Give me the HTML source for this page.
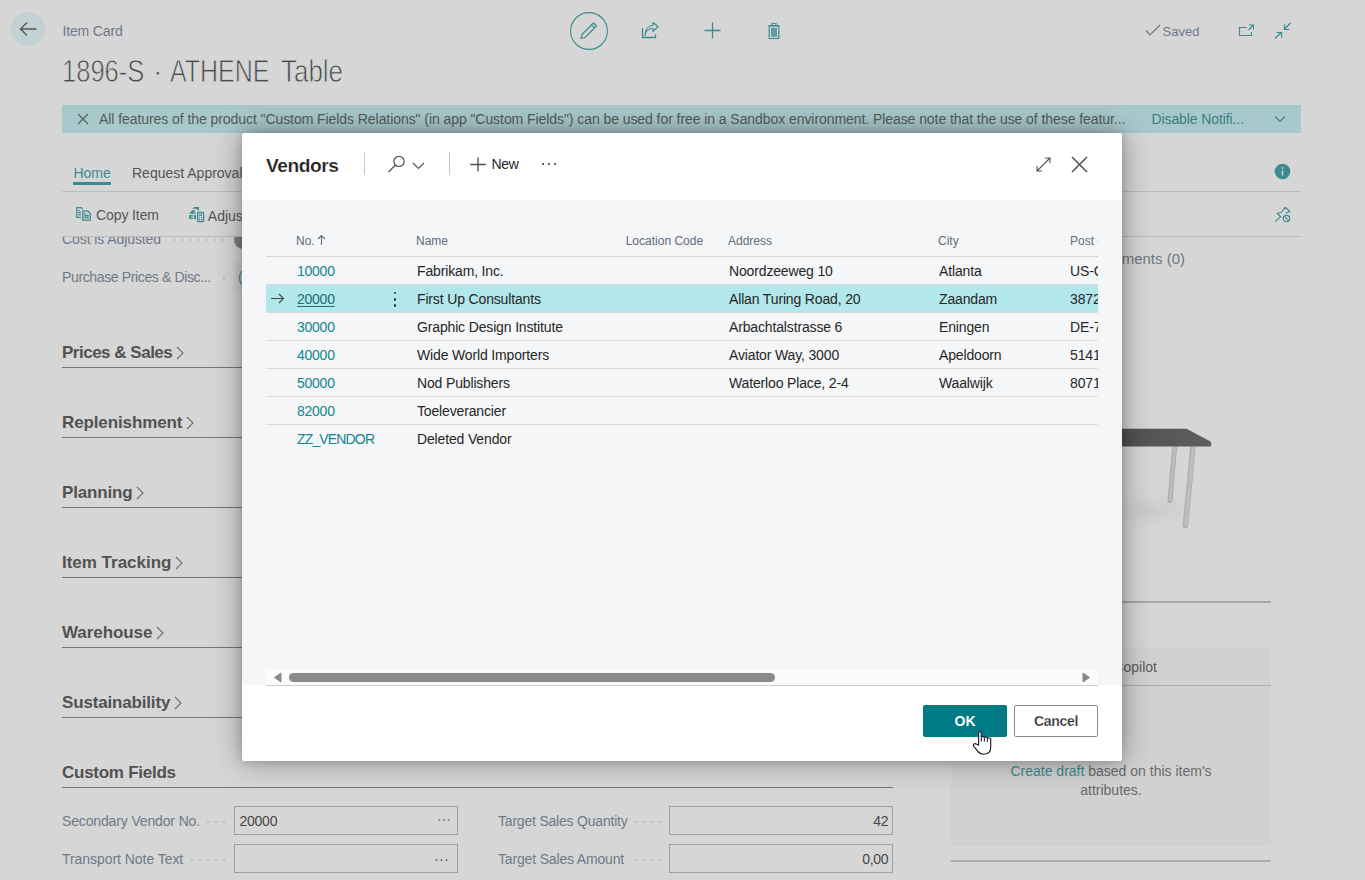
<!DOCTYPE html>
<html><head><meta charset="utf-8"><style>
html,body{margin:0;padding:0;}
body{width:1365px;height:880px;position:relative;overflow:hidden;background:#d6d6d6;font-family:"Liberation Sans", sans-serif;}
.t{position:absolute;white-space:nowrap;line-height:1;}
.r{position:absolute;}
svg.r{overflow:visible;}
</style></head><body>
<svg class="r" style="left:11px;top:12px;" width="34" height="34" viewBox="0 0 34 34"><circle cx="17" cy="17" r="17" fill="#c2d1d3"/><path d="M9.5 17H25.5M16 10.5L9.5 17L16 23.5" stroke="#555" stroke-width="1.3" fill="none"/></svg>
<div class="t" style="left:62.5px;top:24.15px;font-size:14px;color:#6f7987;letter-spacing:-0.15px;">Item Card</div>
<div class="t" style="left:62.4px;top:56.48px;font-size:30.5px;color:#4a4a4a;transform:scaleX(0.8370);transform-origin:0 0;-webkit-text-stroke:0.8px #d6d6d6;">1896-S</div>
<div class="t" style="left:152.8px;top:56.48px;font-size:30.5px;color:#4a4a4a;transform:scaleX(1.0000);transform-origin:0 0;-webkit-text-stroke:0.8px #d6d6d6;">·</div>
<div class="t" style="left:170px;top:56.48px;font-size:30.5px;color:#4a4a4a;transform:scaleX(0.8182);transform-origin:0 0;-webkit-text-stroke:0.8px #d6d6d6;">ATHENE</div>
<div class="t" style="left:280.6px;top:56.48px;font-size:30.5px;color:#4a4a4a;transform:scaleX(0.8506);transform-origin:0 0;-webkit-text-stroke:0.8px #d6d6d6;">Table</div>
<svg class="r" style="left:569px;top:11px;" width="40" height="40" viewBox="0 0 40 40"><circle cx="20" cy="20" r="18.4" stroke="#3d8b91" stroke-width="1.1" fill="none"/><path d="M12 27.5L13 23.5L24.5 12L27.5 15L16 26.5Z M22.5 14L25.5 17" stroke="#3d8b91" stroke-width="1.2" fill="none" stroke-linejoin="round"/></svg>
<svg class="r" style="left:640px;top:21px;" width="20" height="18" viewBox="0 0 20 18"><path d="M2.5 7V16.5H15.5V13.5" stroke="#3d8b91" stroke-width="1.3" fill="none"/><path d="M5 14.5C5.5 9.5 9 7.5 13 7.5V10.5L18 5.5L13 1.5V4.5C8 4.5 5 8.5 5 14.5Z" stroke="#3d8b91" stroke-width="1.2" fill="none" stroke-linejoin="round"/></svg>
<svg class="r" style="left:703px;top:21px;" width="19" height="19" viewBox="0 0 19 19"><path d="M9.5 1.5V17.5M1.5 9.5H17.5" stroke="#3d8b91" stroke-width="1.3"/></svg>
<svg class="r" style="left:766px;top:21px;" width="16" height="19" viewBox="0 0 16 19"><path d="M2.5 4.5H13.5M6 4.5V2.5H10V4.5" stroke="#3d8b91" stroke-width="1.2" fill="none"/><rect x="3.2" y="5" width="9.6" height="12.5" stroke="#3d8b91" stroke-width="1.2" fill="none"/><rect x="5" y="6.8" width="6" height="9" fill="#3d8b91" opacity="0.75"/></svg>
<svg class="r" style="left:1145px;top:24px;" width="16" height="13" viewBox="0 0 16 13"><path d="M1 6.5L5 11L15 1" stroke="#737b85" stroke-width="1.2" fill="none"/></svg>
<div class="t" style="left:1162.5px;top:25.00px;font-size:13px;color:#6f7987;letter-spacing:0px;">Saved</div>
<svg class="r" style="left:1238px;top:23px;" width="18" height="15" viewBox="0 0 18 15"><path d="M9 4.5H1.5V12.5H13.5V9" stroke="#3d8b91" stroke-width="1.2" fill="none"/><path d="M11 2H15.5V6.5M15.5 2L10.5 7" stroke="#3d8b91" stroke-width="1.1" fill="none"/></svg>
<svg class="r" style="left:1274px;top:22px;" width="18" height="18" viewBox="0 0 18 18"><path d="M16.5 1L10.5 7M10.5 2.5V7.5H15.5 M1 16.5L7 10.5M2.5 10.5H7.5V15.5" stroke="#3d8b91" stroke-width="1.2" fill="none"/></svg>
<div class="r" style="left:62px;top:105px;width:1239px;height:28px;background:#a8c9cc;"></div>
<svg class="r" style="left:77px;top:113px;" width="12" height="12" viewBox="0 0 12 12"><path d="M1 1L11 11M11 1L1 11" stroke="#5a5f60" stroke-width="1.2"/></svg>
<div class="t" style="left:99px;top:112.15px;font-size:14px;color:#535a5b;letter-spacing:-0.068px;">All features of the product "Custom Fields Relations" (in app "Custom Fields") can be used for free in a Sandbox environment. Please note that the use of these featur...</div>
<div class="t" style="left:1151.5px;top:112.15px;font-size:14px;color:#3c7e83;letter-spacing:-0.1px;">Disable Notifi...</div>
<svg class="r" style="left:1274px;top:115px;" width="12" height="8" viewBox="0 0 12 8"><path d="M1 1.5L6 6.5L11 1.5" stroke="#3c7e83" stroke-width="1.2" fill="none"/></svg>
<div class="t" style="left:73.4px;top:166.15px;font-size:14px;color:#3f8a8f;">Home</div>
<div class="r" style="left:73px;top:182px;width:38px;height:2.5px;background:#3f8a8f;"></div>
<div class="t" style="left:132px;top:166.15px;font-size:14px;color:#555555;">Request Approval</div>
<div class="r" style="left:62px;top:191px;width:1239px;height:1px;background:#b9bcbe;"></div>
<svg class="r" style="left:70px;top:200px;" width="30" height="28" viewBox="0 0 30 28"><g stroke="#3d8b91" stroke-width="1.3" fill="none" stroke-linejoin="round"><path d="M11 17.3H6.8V7.7H11.3L12.7 8.9"/><path d="M8.3 10.4H9.6M8.3 12.4H10.9M8.3 14.5H10.9"/><path d="M12.8 10.8H17.4L20.3 13.4V20.2H12.8Z"/><path d="M14.3 13.5H15.6M14.3 15.5H18.8M14.3 17.5H18.8"/></g></svg>
<div class="t" style="left:96px;top:208.15px;font-size:14px;color:#555555;letter-spacing:-0.1px;">Copy Item</div>
<svg class="r" style="left:184px;top:200px;" width="30" height="28" viewBox="0 0 30 28"><rect x="13.6" y="12.5" width="6" height="9" rx="0.8" stroke="#3d8b91" stroke-width="1.3" fill="none"/><rect x="15.1" y="14.2" width="3" height="1.6" fill="#3d8b91"/><g fill="#3d8b91"><circle cx="15.5" cy="17.5" r="0.65"/><circle cx="17.6" cy="17.5" r="0.65"/><circle cx="15.5" cy="19.4" r="0.65"/><circle cx="17.6" cy="19.4" r="0.65"/><path d="M5.1 15.1H8.9V16.6H7.1V17.8H8.9V19.1H5.1Z"/><path d="M9.9 15.1H11.9V19.1H9.9Z"/><path d="M5.1 13.7H11.9V12.6H9.4L11.9 10.2H8.2Z"/><path d="M8.1 8.7L10.5 7H15V10.6H13.3V8.7Z"/></g></svg>
<div class="t" style="left:207.8px;top:209.15px;font-size:14px;color:#555555;">Adjust Cost</div>
<svg class="r" style="left:1268px;top:200px;" width="30" height="28" viewBox="0 0 30 28"><g stroke="#3d8b91" stroke-width="1.15" fill="none" stroke-linejoin="round"><path d="M7.3 21.6L12.1 16.8M13.5 17.5L9.2 13.3L13.4 12.5L17 7.3L22.1 11.5L19.1 12.4L18 13.5"/><circle cx="18.5" cy="18.5" r="3.2"/><path d="M16.2 16.2L20.8 20.8"/></g></svg>
<svg class="r" style="left:1274px;top:163px;" width="17" height="17" viewBox="0 0 17 17"><circle cx="8.5" cy="8.5" r="7.8" fill="#3d8a90"/><path d="M8.5 7.5V12.5" stroke="#d6d6d6" stroke-width="1.4"/><circle cx="8.5" cy="5" r="0.9" fill="#d6d6d6"/></svg>
<div class="r" style="left:62px;top:236px;width:1239px;height:1px;background:#b9bcbe;"></div>
<div class="r" style="left:0;top:237px;width:1365px;height:643px;overflow:hidden">
<div class="r" style="left:0;top:-237px;width:1365px;height:880px;">
<div class="t" style="left:62px;top:232.15px;font-size:14px;color:#6f7987;letter-spacing:-0.087px;">Cost is Adjusted</div>
<div class="r" style="left:174px;top:239px;width:2px;height:2px;background:#b3b6ba;border-radius:1px;"></div>
<div class="r" style="left:182px;top:239px;width:2px;height:2px;background:#b3b6ba;border-radius:1px;"></div>
<div class="r" style="left:190px;top:239px;width:2px;height:2px;background:#b3b6ba;border-radius:1px;"></div>
<div class="r" style="left:198px;top:239px;width:2px;height:2px;background:#b3b6ba;border-radius:1px;"></div>
<div class="r" style="left:206px;top:239px;width:2px;height:2px;background:#b3b6ba;border-radius:1px;"></div>
<div class="r" style="left:214px;top:239px;width:2px;height:2px;background:#b3b6ba;border-radius:1px;"></div>
<div class="r" style="left:222px;top:239px;width:2px;height:2px;background:#b3b6ba;border-radius:1px;"></div>
<div class="r" style="left:234px;top:231px;width:30px;height:18px;background:#7b8087;border-radius:9px;"></div>
<div class="t" style="left:62px;top:270.15px;font-size:14px;color:#6f7987;letter-spacing:-0.365px;">Purchase Prices &amp; Disc...</div>
<div class="r" style="left:222.5px;top:278px;width:2px;height:2px;background:#b3b6ba;border-radius:1px;"></div>
<div class="r" style="left:234px;top:262px;width:300px;height:29px;background:#cfd0d1;"></div>
<div class="t" style="left:238px;top:270.15px;font-size:14px;color:#3d8b91;">(0)</div>
<div class="t" style="left:985px;top:251.30px;width:200px;text-align:right;font-size:15px;color:#70777f;">Attachments (0)</div>
<div class="t" style="left:62px;top:343.61px;font-size:17px;color:#525252;font-weight:700;letter-spacing:-0.493px;">Prices &amp; Sales</div>
<svg class="r" style="left:176.3px;top:346px;" width="8" height="14" viewBox="0 0 8 14"><path d="M1 1L7 7L1 13" stroke="#6a6e72" stroke-width="1.1" fill="none"/></svg>
<div class="r" style="left:62px;top:367px;width:831px;height:1px;background:#6f767e;"></div>
<div class="t" style="left:62px;top:413.61px;font-size:17px;color:#525252;font-weight:700;letter-spacing:-0.120px;">Replenishment</div>
<svg class="r" style="left:186.3px;top:416px;" width="8" height="14" viewBox="0 0 8 14"><path d="M1 1L7 7L1 13" stroke="#6a6e72" stroke-width="1.1" fill="none"/></svg>
<div class="r" style="left:62px;top:437px;width:831px;height:1px;background:#6f767e;"></div>
<div class="t" style="left:62px;top:483.61px;font-size:17px;color:#525252;font-weight:700;letter-spacing:-0.173px;">Planning</div>
<svg class="r" style="left:136.4px;top:486px;" width="8" height="14" viewBox="0 0 8 14"><path d="M1 1L7 7L1 13" stroke="#6a6e72" stroke-width="1.1" fill="none"/></svg>
<div class="r" style="left:62px;top:507px;width:831px;height:1px;background:#6f767e;"></div>
<div class="t" style="left:62px;top:553.61px;font-size:17px;color:#525252;font-weight:700;letter-spacing:-0.016px;">Item Tracking</div>
<svg class="r" style="left:175.4px;top:556px;" width="8" height="14" viewBox="0 0 8 14"><path d="M1 1L7 7L1 13" stroke="#6a6e72" stroke-width="1.1" fill="none"/></svg>
<div class="r" style="left:62px;top:577px;width:831px;height:1px;background:#6f767e;"></div>
<div class="t" style="left:62px;top:623.61px;font-size:17px;color:#525252;font-weight:700;letter-spacing:-0.068px;">Warehouse</div>
<svg class="r" style="left:156.4px;top:626px;" width="8" height="14" viewBox="0 0 8 14"><path d="M1 1L7 7L1 13" stroke="#6a6e72" stroke-width="1.1" fill="none"/></svg>
<div class="r" style="left:62px;top:647px;width:831px;height:1px;background:#6f767e;"></div>
<div class="t" style="left:62px;top:693.61px;font-size:17px;color:#525252;font-weight:700;letter-spacing:-0.167px;">Sustainability</div>
<svg class="r" style="left:174.2px;top:696px;" width="8" height="14" viewBox="0 0 8 14"><path d="M1 1L7 7L1 13" stroke="#6a6e72" stroke-width="1.1" fill="none"/></svg>
<div class="r" style="left:62px;top:717px;width:831px;height:1px;background:#6f767e;"></div>
<div class="t" style="left:62px;top:763.61px;font-size:17px;color:#525252;font-weight:700;letter-spacing:-0.263px;">Custom Fields</div>
<div class="r" style="left:62px;top:787px;width:831px;height:1px;background:#6f767e;"></div>
<div class="t" style="left:62px;top:814.15px;font-size:14px;color:#6f7987;letter-spacing:-0.144px;">Secondary Vendor No.</div>
<div class="r" style="left:206.5px;top:820.5px;width:2px;height:2px;background:#b3b6ba;border-radius:1px;"></div>
<div class="r" style="left:214.5px;top:820.5px;width:2px;height:2px;background:#b3b6ba;border-radius:1px;"></div>
<div class="r" style="left:222.5px;top:820.5px;width:2px;height:2px;background:#b3b6ba;border-radius:1px;"></div>
<div class="r" style="left:234px;top:806px;width:224px;height:29px;background:transparent;box-sizing:border-box;border:1px solid #9aa0a6;"></div>
<div class="t" style="left:62px;top:852.15px;font-size:14px;color:#6f7987;letter-spacing:-0.051px;">Transport Note Text</div>
<div class="r" style="left:190.5px;top:858.5px;width:2px;height:2px;background:#b3b6ba;border-radius:1px;"></div>
<div class="r" style="left:198.5px;top:858.5px;width:2px;height:2px;background:#b3b6ba;border-radius:1px;"></div>
<div class="r" style="left:206.5px;top:858.5px;width:2px;height:2px;background:#b3b6ba;border-radius:1px;"></div>
<div class="r" style="left:214.5px;top:858.5px;width:2px;height:2px;background:#b3b6ba;border-radius:1px;"></div>
<div class="r" style="left:222.5px;top:858.5px;width:2px;height:2px;background:#b3b6ba;border-radius:1px;"></div>
<div class="r" style="left:234px;top:844px;width:224px;height:29px;background:transparent;box-sizing:border-box;border:1px solid #9aa0a6;"></div>
<div class="t" style="left:239.5px;top:814.15px;font-size:14px;color:#474747;letter-spacing:-0.25px;">20000</div>
<div class="t" style="left:437px;top:812.15px;font-size:14px;color:#5a5f66;">···</div>
<div class="t" style="left:434px;top:851.30px;font-size:15px;color:#4f545b;">···</div>
<div class="t" style="left:498px;top:814.15px;font-size:14px;color:#6f7987;letter-spacing:-0.203px;">Target Sales Quantity</div>
<div class="r" style="left:634.5px;top:820.5px;width:2px;height:2px;background:#b3b6ba;border-radius:1px;"></div>
<div class="r" style="left:642.5px;top:820.5px;width:2px;height:2px;background:#b3b6ba;border-radius:1px;"></div>
<div class="r" style="left:650.5px;top:820.5px;width:2px;height:2px;background:#b3b6ba;border-radius:1px;"></div>
<div class="r" style="left:658.5px;top:820.5px;width:2px;height:2px;background:#b3b6ba;border-radius:1px;"></div>
<div class="r" style="left:669px;top:806px;width:224px;height:29px;background:transparent;box-sizing:border-box;border:1px solid #9aa0a6;"></div>
<div class="t" style="left:788.2px;top:814.15px;width:100px;text-align:right;font-size:14px;color:#474747;letter-spacing:-0.35px;">42</div>
<div class="t" style="left:498px;top:852.15px;font-size:14px;color:#6f7987;letter-spacing:-0.163px;">Target Sales Amount</div>
<div class="r" style="left:634.5px;top:858.5px;width:2px;height:2px;background:#b3b6ba;border-radius:1px;"></div>
<div class="r" style="left:642.5px;top:858.5px;width:2px;height:2px;background:#b3b6ba;border-radius:1px;"></div>
<div class="r" style="left:650.5px;top:858.5px;width:2px;height:2px;background:#b3b6ba;border-radius:1px;"></div>
<div class="r" style="left:658.5px;top:858.5px;width:2px;height:2px;background:#b3b6ba;border-radius:1px;"></div>
<div class="r" style="left:669px;top:844px;width:224px;height:29px;background:transparent;box-sizing:border-box;border:1px solid #9aa0a6;"></div>
<div class="t" style="left:788.2px;top:852.15px;width:100px;text-align:right;font-size:14px;color:#474747;letter-spacing:-0.35px;">0,00</div>
<svg class="r" style="left:1100px;top:420px;" width="130" height="120" viewBox="0 0 130 120"><defs><linearGradient id="tg" x1="0" x2="1"><stop offset="0" stop-color="#4e4e4e"/><stop offset="1" stop-color="#5e5e5e"/></linearGradient></defs><defs><radialGradient id="sh"><stop offset="0" stop-color="#c4c4c4"/><stop offset="1" stop-color="#d6d6d6" stop-opacity="0"/></radialGradient></defs><ellipse cx="50" cy="90" rx="70" ry="25" fill="url(#sh)" opacity="0.7"/><path d="M74.7 26L70 80.5" stroke="#adadad" stroke-width="5" stroke-linecap="round"/><path d="M74.9 26L70.2 80" stroke="#bcbcbc" stroke-width="3" stroke-linecap="round"/><path d="M93 26L85.5 105.5" stroke="#afafaf" stroke-width="5.6" stroke-linecap="round"/><path d="M93.3 26L85.8 105" stroke="#bebebe" stroke-width="3.4" stroke-linecap="round"/><path d="M0 8.8H86.5L110.5 21.5Q111.2 22 111.2 23V25.5Q111 26.4 110 26.4H0Z" fill="url(#tg)"/></svg>
<div class="r" style="left:951px;top:601px;width:320px;height:2px;background:#a3a8ad;"></div>
<div class="r" style="left:951px;top:647px;width:320px;height:199px;background:#d1d1d1;"></div>
<div class="t" style="left:957px;top:660.15px;width:200px;text-align:right;font-size:14px;color:#5a5a5a;">Marketing Text with Copilot</div>
<div class="r" style="left:951px;top:685px;width:320px;height:1px;background:#a9aeb3;"></div>
<div class="t" style="left:981.0px;top:764.15px;width:260px;text-align:center;font-size:14px;color:#6a6a6a;"><span style="color:#3f8a8f">Create draft</span> based on this item's</div>
<div class="t" style="left:981.0px;top:783.15px;width:260px;text-align:center;font-size:14px;color:#6a6a6a;">attributes.</div>
<div class="r" style="left:951px;top:860px;width:320px;height:2px;background:#a9aeb3;"></div>
</div></div>
<div class="r" style="left:242px;top:133px;width:880px;height:628px;background:#fff;border-radius:2px;box-shadow:0 0 30px rgba(0,0,0,0.38), 0 0 8px rgba(0,0,0,0.15);"></div>
<div class="t" style="left:266px;top:156.25px;font-size:19.2px;color:#222;font-weight:700;letter-spacing:-0.45px;-webkit-text-stroke:0.2px #fff;">Vendors</div>
<div class="r" style="left:364px;top:152px;width:1px;height:23px;background:#c8c9cb;"></div>
<svg class="r" style="left:386px;top:154px;" width="22" height="20" viewBox="0 0 22 20"><circle cx="13" cy="7.4" r="5.1" stroke="#555" stroke-width="1.2" fill="none"/><path d="M9.5 11L2.5 18" stroke="#555" stroke-width="1.2"/></svg>
<svg class="r" style="left:411px;top:160px;" width="16" height="11" viewBox="0 0 16 11"><path d="M2 3L7.5 8.5L13 3" stroke="#555" stroke-width="1.2" fill="none"/></svg>
<div class="r" style="left:449px;top:152px;width:1px;height:23px;background:#c8c9cb;"></div>
<svg class="r" style="left:469px;top:156px;" width="18" height="17" viewBox="0 0 18 17"><path d="M9 1.5V15.5M1.2 8.5H16.8" stroke="#505050" stroke-width="1.35"/></svg>
<div class="t" style="left:491.4px;top:157.15px;font-size:14px;color:#262626;letter-spacing:-0.3px;">New</div>
<div class="r" style="left:541.5px;top:163.2px;width:2px;height:2px;background:#333;border-radius:1px;"></div>
<div class="r" style="left:547.8px;top:163.2px;width:2px;height:2px;background:#333;border-radius:1px;"></div>
<div class="r" style="left:554.1px;top:163.2px;width:2px;height:2px;background:#333;border-radius:1px;"></div>
<svg class="r" style="left:1035px;top:156px;" width="17" height="17" viewBox="0 0 17 17"><path d="M2 15L15 2M10 2H15V7M2 10V15H7" stroke="#555" stroke-width="1.1" fill="none"/></svg>
<svg class="r" style="left:1070px;top:155px;" width="19" height="19" viewBox="0 0 19 19"><path d="M2 2L17 17M17 2L2 17" stroke="#555" stroke-width="1.6"/></svg>
<div class="r" style="left:242px;top:200px;width:880px;height:485px;background:#f5f6f8;"></div>
<div class="t" style="left:296px;top:234.84px;font-size:12px;color:#616c79;">No.</div>
<svg class="r" style="left:317px;top:234px;" width="9" height="12" viewBox="0 0 9 12"><path d="M4.5 11V1.5M1 5L4.5 1.5L8 5" stroke="#616c79" stroke-width="1.1" fill="none"/></svg>
<div class="t" style="left:416px;top:234.84px;font-size:12px;color:#616c79;">Name</div>
<div class="t" style="left:625.7px;top:234.84px;font-size:12px;color:#616c79;">Location Code</div>
<div class="t" style="left:728px;top:234.84px;font-size:12px;color:#616c79;">Address</div>
<div class="t" style="left:938px;top:234.84px;font-size:12px;color:#616c79;">City</div>
<div class="r" style="left:266px;top:200px;width:832px;height:470px;overflow:hidden">
<div class="t" style="left:804px;top:34.84px;font-size:12px;color:#616c79;">Post Code</div>
<div class="r" style="left:144px;top:0px;width:1px;height:56px;background:#eff0f3;"></div>
<div class="r" style="left:0px;top:56px;width:832px;height:1.2px;background:#d3d5d8;"></div>
<div class="t" style="left:31px;top:64.15px;font-size:14px;color:#13868f;letter-spacing:-0.25px;">10000</div>
<div class="t" style="left:151px;top:64.15px;font-size:14px;color:#262626;letter-spacing:-0.15px;">Fabrikam, Inc.</div>
<div class="t" style="left:463px;top:64.15px;font-size:14px;color:#262626;letter-spacing:-0.15px;">Noordzeeweg 10</div>
<div class="t" style="left:673px;top:64.15px;font-size:14px;color:#262626;letter-spacing:-0.15px;">Atlanta</div>
<div class="t" style="left:804px;top:64.15px;font-size:14px;color:#262626;letter-spacing:-0.15px;">US-GA 31772</div>
<div class="r" style="left:0px;top:84px;width:832px;height:1px;background:#d9dbde;"></div>
<div class="r" style="left:0px;top:84.5px;width:832px;height:28px;background:#b2e7eb;"></div>
<div class="t" style="left:31px;top:92.15px;font-size:14px;color:#1f6e73;letter-spacing:-0.25px;"><span style="text-decoration:underline;text-underline-offset:2px">20000</span></div>
<div class="t" style="left:151px;top:92.15px;font-size:14px;color:#262626;letter-spacing:-0.15px;">First Up Consultants</div>
<div class="t" style="left:463px;top:92.15px;font-size:14px;color:#262626;letter-spacing:-0.15px;">Allan Turing Road, 20</div>
<div class="t" style="left:673px;top:92.15px;font-size:14px;color:#262626;letter-spacing:-0.15px;">Zaandam</div>
<div class="t" style="left:804px;top:92.15px;font-size:14px;color:#262626;letter-spacing:-0.15px;">3872 AD</div>
<div class="r" style="left:0px;top:112px;width:832px;height:1px;background:#d9dbde;"></div>
<div class="t" style="left:31px;top:120.15px;font-size:14px;color:#13868f;letter-spacing:-0.25px;">30000</div>
<div class="t" style="left:151px;top:120.15px;font-size:14px;color:#262626;letter-spacing:-0.15px;">Graphic Design Institute</div>
<div class="t" style="left:463px;top:120.15px;font-size:14px;color:#262626;letter-spacing:-0.15px;">Arbachtalstrasse 6</div>
<div class="t" style="left:673px;top:120.15px;font-size:14px;color:#262626;letter-spacing:-0.15px;">Eningen</div>
<div class="t" style="left:804px;top:120.15px;font-size:14px;color:#262626;letter-spacing:-0.15px;">DE-72800</div>
<div class="r" style="left:0px;top:140px;width:832px;height:1px;background:#d9dbde;"></div>
<div class="t" style="left:31px;top:148.15px;font-size:14px;color:#13868f;letter-spacing:-0.25px;">40000</div>
<div class="t" style="left:151px;top:148.15px;font-size:14px;color:#262626;letter-spacing:-0.15px;">Wide World Importers</div>
<div class="t" style="left:463px;top:148.15px;font-size:14px;color:#262626;letter-spacing:-0.15px;">Aviator Way, 3000</div>
<div class="t" style="left:673px;top:148.15px;font-size:14px;color:#262626;letter-spacing:-0.15px;">Apeldoorn</div>
<div class="t" style="left:804px;top:148.15px;font-size:14px;color:#262626;letter-spacing:-0.15px;">5141 XD</div>
<div class="r" style="left:0px;top:168px;width:832px;height:1px;background:#d9dbde;"></div>
<div class="t" style="left:31px;top:176.15px;font-size:14px;color:#13868f;letter-spacing:-0.25px;">50000</div>
<div class="t" style="left:151px;top:176.15px;font-size:14px;color:#262626;letter-spacing:-0.15px;">Nod Publishers</div>
<div class="t" style="left:463px;top:176.15px;font-size:14px;color:#262626;letter-spacing:-0.15px;">Waterloo Place, 2-4</div>
<div class="t" style="left:673px;top:176.15px;font-size:14px;color:#262626;letter-spacing:-0.15px;">Waalwijk</div>
<div class="t" style="left:804px;top:176.15px;font-size:14px;color:#262626;letter-spacing:-0.15px;">8071 KL</div>
<div class="r" style="left:0px;top:196px;width:832px;height:1px;background:#d9dbde;"></div>
<div class="t" style="left:31px;top:204.15px;font-size:14px;color:#13868f;letter-spacing:-0.25px;">82000</div>
<div class="t" style="left:151px;top:204.15px;font-size:14px;color:#262626;letter-spacing:-0.15px;">Toeleverancier</div>
<div class="t" style="left:463px;top:204.15px;font-size:14px;color:#262626;letter-spacing:-0.15px;"></div>
<div class="t" style="left:673px;top:204.15px;font-size:14px;color:#262626;letter-spacing:-0.15px;"></div>
<div class="t" style="left:804px;top:204.15px;font-size:14px;color:#262626;letter-spacing:-0.15px;"></div>
<div class="r" style="left:0px;top:224px;width:832px;height:1px;background:#d9dbde;"></div>
<div class="t" style="left:31px;top:232.15px;font-size:14px;color:#13868f;letter-spacing:-0.85px;">ZZ_VENDOR</div>
<div class="t" style="left:151px;top:232.15px;font-size:14px;color:#262626;letter-spacing:-0.15px;">Deleted Vendor</div>
<div class="t" style="left:463px;top:232.15px;font-size:14px;color:#262626;letter-spacing:-0.15px;"></div>
<div class="t" style="left:673px;top:232.15px;font-size:14px;color:#262626;letter-spacing:-0.15px;"></div>
<div class="t" style="left:804px;top:232.15px;font-size:14px;color:#262626;letter-spacing:-0.15px;"></div>
<svg class="r" style="left:4px;top:93px;" width="16" height="12" viewBox="0 0 16 12"><path d="M1 5.5H13.5M9 1L13.5 5.5L9 10" stroke="#444" stroke-width="1.1" fill="none"/></svg>
<div class="r" style="left:128.1px;top:92.2px;width:2.3px;height:2.3px;background:#333;border-radius:1.2px;"></div>
<div class="r" style="left:128.1px;top:98.3px;width:2.3px;height:2.3px;background:#333;border-radius:1.2px;"></div>
<div class="r" style="left:128.1px;top:104.4px;width:2.3px;height:2.3px;background:#333;border-radius:1.2px;"></div>
</div>
<div class="r" style="left:266px;top:670px;width:832px;height:15px;background:#fbfbfb;"></div>
<div class="r" style="left:266px;top:685px;width:832px;height:1px;background:#d0d0d0;"></div>
<svg class="r" style="left:273px;top:672px;" width="9" height="11" viewBox="0 0 9 11"><path d="M8 1V10L1.5 5.5Z" fill="#8a8a8a" stroke="#8a8a8a" stroke-width="1" stroke-linejoin="round"/></svg>
<svg class="r" style="left:1082px;top:672px;" width="9" height="11" viewBox="0 0 9 11"><path d="M1 1V10L7.5 5.5Z" fill="#8a8a8a" stroke="#8a8a8a" stroke-width="1" stroke-linejoin="round"/></svg>
<div class="r" style="left:289px;top:673px;width:486px;height:9px;background:#8a8a8a;border-radius:4.5px;"></div>
<div class="r" style="left:923px;top:705px;width:84px;height:32px;background:#007a83;border-radius:2px;"></div>
<div class="t" style="left:923.0px;top:714.15px;width:84px;text-align:center;font-size:14px;color:#ffffff;font-weight:700;">OK</div>
<div class="r" style="left:1014px;top:705px;width:84px;height:32px;background:#fff;box-sizing:border-box;border:1px solid #8a8a8a;border-radius:2px;"></div>
<div class="t" style="left:1014.0px;top:714.15px;width:84px;text-align:center;font-size:14px;color:#2b2b2b;font-weight:700;letter-spacing:-0.3px;-webkit-text-stroke:0.25px #fff;">Cancel</div>
<svg class="r" style="left:965px;top:725px;" width="35" height="35" viewBox="0 0 35 35"><path d="M13.6 20.2L13.6 8.3Q13.6 6.7 14.9 6.7Q16.2 6.7 16.2 8.3L16.2 11.9Q17.8 11.3 19.4 12.1Q20.9 11.8 22.4 12.8Q24.2 12.6 25.7 13.8L25.7 22.2Q25.7 29.2 18.6 29.2Q15 29.2 12.6 26.2L8.7 21.2Q7.9 20 8.9 19Q10.2 18.2 11.6 19.2Z" fill="#fff" stroke="#1b1e2e" stroke-width="1.15" stroke-linejoin="round"/><path d="M16.3 12.2V16.6M19.4 12.3V16.6M22.4 13V16.8" stroke="#1b1e2e" stroke-width="1.1"/></svg>
</body></html>
